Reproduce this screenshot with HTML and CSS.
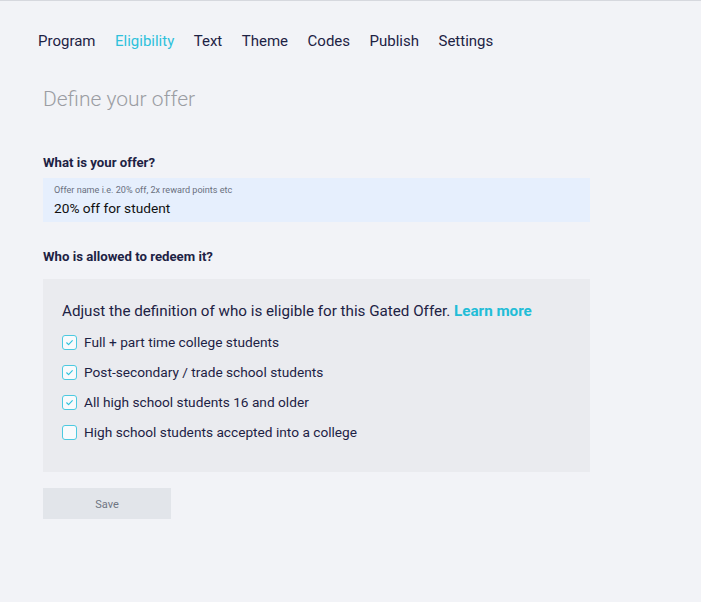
FILE: index.html
```html
<!DOCTYPE html>
<html>
<head>
<meta charset="utf-8">
<link rel="stylesheet" href="styles.css">
</head>
<body>
<div class="page">
  <nav class="tabs">
    <span class="tab">Program</span>
    <span class="tab active">Eligibility</span>
    <span class="tab">Text</span>
    <span class="tab">Theme</span>
    <span class="tab">Codes</span>
    <span class="tab">Publish</span>
    <span class="tab">Settings</span>
  </nav>
  <main class="content">
    <h1 class="title">Define your offer</h1>
    <h2 class="label">What is your offer?</h2>
    <div class="field">
      <div class="field-hint">Offer name i.e. 20% off, 2x reward points etc</div>
      <div class="field-value">20% off for student</div>
    </div>
    <h2 class="label second">Who is allowed to redeem it?</h2>
    <div class="panel">
      <p class="panel-intro">Adjust the definition of who is eligible for this Gated Offer. <a class="link">Learn more</a></p>
      <ul class="options">
        <li class="option"><span class="box checked"><svg viewBox="0 0 16 16" width="15" height="15"><path d="M5 8.3 L7 10.2 L11 6" fill="none" stroke="#2cc3dc" stroke-width="1.2" stroke-linecap="round" stroke-linejoin="round"/></svg></span>Full + part time college students</li>
        <li class="option"><span class="box checked"><svg viewBox="0 0 16 16" width="15" height="15"><path d="M5 8.3 L7 10.2 L11 6" fill="none" stroke="#2cc3dc" stroke-width="1.2" stroke-linecap="round" stroke-linejoin="round"/></svg></span>Post-secondary / trade school students</li>
        <li class="option"><span class="box checked"><svg viewBox="0 0 16 16" width="15" height="15"><path d="M5 8.3 L7 10.2 L11 6" fill="none" stroke="#2cc3dc" stroke-width="1.2" stroke-linecap="round" stroke-linejoin="round"/></svg></span>All high school students 16 and older</li>
        <li class="option"><span class="box"></span>High school students accepted into a college</li>
      </ul>
    </div>
    <button class="save">Save</button>
  </main>
</div>
</body>
</html>
```
FILE: styles.css
```css
html, body {
  margin: 0;
  padding: 0;
}
body {
  background: #f2f3f7;
  font-family: Roboto, "Liberation Sans", sans-serif;
  color: #1d2244;
  height: 602px;
  border-top: 1px solid #d6d8de;
  box-sizing: border-box;
}
.page {
  padding: 30px 0 0 38px;
}
.tabs {
  display: flex;
  gap: 19.5px;
  font-size: 15px;
  line-height: 20px;
}
.tab {
  color: #1d2244;
}
.tab.active {
  color: #2ec1db;
}
.content {
  padding-left: 5px;
  width: 547px;
}
.title {
  margin: 36px 0 0;
  font-size: 21px;
  line-height: 24px;
  font-weight: 300;
  color: #9b9da3;
}
.label {
  margin: 44px 0 0;
  font-size: 13.2px;
  line-height: 16px;
  font-weight: 700;
  color: #1d2244;
}
.label.second {
  margin-top: 27px;
}
.field {
  margin-top: 7px;
  background: #e6effd;
  height: 44px;
  box-sizing: border-box;
  padding: 7px 11px 0;
}
.field-hint {
  font-size: 9.1px;
  line-height: 11px;
  color: #6a7080;
}
.field-value {
  margin-top: 3px;
  font-size: 13.7px;
  line-height: 18px;
  color: #111;
}
.panel {
  margin-top: 14px;
  background: #eaebef;
  height: 193px;
  box-sizing: border-box;
  padding: 21px 19px 0;
}
.panel-intro {
  margin: 0;
  font-size: 15.2px;
  line-height: 22px;
  color: #1d2244;
}
.link {
  color: #22bdd7;
  font-weight: 700;
}
.options {
  list-style: none;
  margin: 11px 0 0;
  padding: 0;
  display: flex;
  flex-direction: column;
  gap: 12px;
}
.option {
  display: flex;
  align-items: center;
  gap: 7px;
  font-size: 13.7px;
  line-height: 18px;
  color: #1d2244;
}
.box {
  width: 15px;
  height: 15px;
  box-sizing: border-box;
  border: 1px solid #4cc9e0;
  border-radius: 3px;
  background: #f8fafc;
  display: flex;
  align-items: center;
  justify-content: center;
  position: relative;
}
.box svg {
  position: absolute;
  left: -1px;
  top: -1px;
}
.save {
  margin-top: 16px;
  width: 128px;
  height: 31px;
  border: none;
  background: #e2e5ea;
  color: #6f7582;
  font-family: Roboto, "Liberation Sans", sans-serif;
  font-size: 11px;
  padding: 1px 0 0;
}
```
